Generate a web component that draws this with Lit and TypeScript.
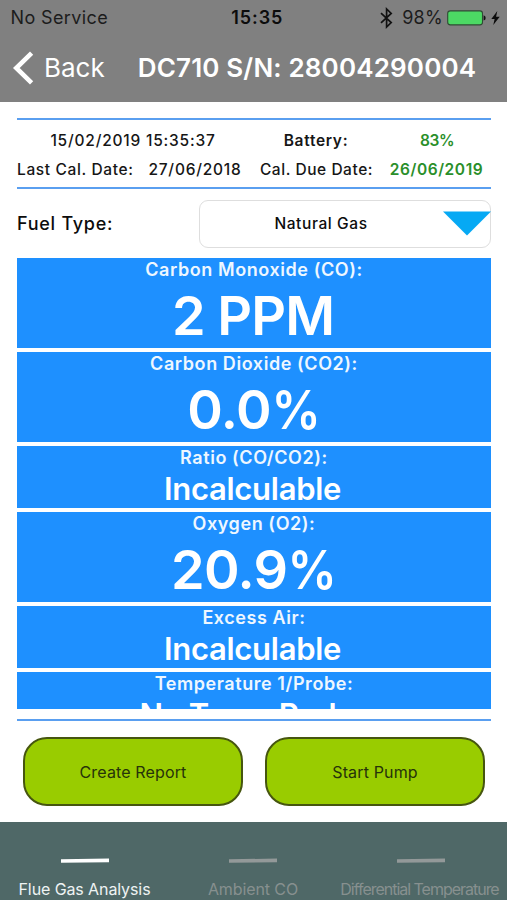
import { LitElement, html, css, svg } from "lit";
import { customElement, property } from "lit/decorators.js";
import { classMap } from "lit/directives/class-map.js";

interface Reading {
  label: string;
  value: string;
  unit?: string;
  kind: string;
}

const READINGS: Reading[] = [
  { label: "Carbon Monoxide (CO):", value: "2 PPM", kind: "ppm" },
  { label: "Carbon Dioxide (CO2):", value: "0.0", unit: "%", kind: "percent" },
  { label: "Ratio (CO/CO2):", value: "Incalculable", kind: "small" },
  { label: "Oxygen (O2):", value: "20.9", unit: "%", kind: "percent" },
  { label: "Excess Air:", value: "Incalculable", kind: "small" },
  { label: "Temperature 1/Probe:", value: "No Temp Probe", kind: "small" },
];

@customElement("status-bar")
class StatusBar extends LitElement {
  static styles = css`
    :host {
      display: grid;
      grid-template-columns: 1fr auto 1fr;
      align-items: center;
      height: 35px;
      padding: 0 7px 0 10.5px;
      font-size: 18px;
      line-height: 35px;
      color: #1c1c1c;
    }
    .carrier { letter-spacing: 0.38px; }
    .time { font-weight: 600; letter-spacing: 0.9px; color: #0c0c0c; margin-left: 4px; }
    .right { display: flex; justify-content: flex-end; align-items: center; }
    .percent { letter-spacing: 0.3px; margin: 0 4px 0 9px; }
    .bluetooth, .battery, .bolt { display: block; }
    .bolt { margin-left: 5px; }
  `;
  render() {
    return html`
      <span class="carrier">No Service</span>
      <span class="time">15:35</span>
      <div class="right">
        <svg class="bluetooth" width="13" height="22" viewBox="0 0 13 22">
          <path d="M1 6.2 L11.2 15.6 L6.6 20 V2 L11.2 6.4 L1 15.8" fill="none" stroke="#111" stroke-width="1.7" />
        </svg>
        <span class="percent">98%</span>
        <svg class="battery" width="39" height="16" viewBox="0 0 39 16">
          <rect x="0.7" y="0.9" width="34.8" height="14" rx="2.6" fill="#4cd964" stroke="#2f4a34" stroke-width="1.1" />
          <path d="M36.6 5.3 Q38.7 5.8 38.7 8 T36.6 10.6Z" fill="#111" />
        </svg>
        <svg class="bolt" width="9" height="14" viewBox="0 0 9 14">
          <path d="M6.3 0 L0.3 7.9 H3.6 L2.3 14 L8.7 5.7 H5.1Z" fill="#0c0c0c" />
        </svg>
      </div>
    `;
  }
}

@customElement("nav-header")
class NavHeader extends LitElement {
  static styles = css`
    :host {
      display: flex;
      align-items: center;
      height: 65px;
      padding: 0 0 2px 12px;
      font-size: 26px;
      color: #fff;
    }
    .chevron { display: block; margin-right: 10px; }
    .back { letter-spacing: 0; }
    .title { margin-left: 33px; font-weight: 600; letter-spacing: 0.16px; white-space: nowrap; }
  `;
  render() {
    return html`
      <svg class="chevron" width="22" height="34" viewBox="0 0 22 34">
        <path d="M19.6 2.2 L4.3 17 L19.6 31.8" fill="none" stroke="#fff" stroke-width="4.6" />
      </svg>
      <span class="back">Back</span>
      <span class="title">DC710 S/N: 28004290004</span>
    `;
  }
}

@customElement("device-info")
class DeviceInfo extends LitElement {
  static styles = css`
    :host {
      display: grid;
      grid-template-columns: 115px 125px 118px 116px;
      grid-template-rows: 29px 28px;
      height: 71px;
      padding-top: 6px;
      box-sizing: border-box;
      border-top: 2px solid #5a9ff0;
      border-bottom: 2px solid #5a9ff0;
      align-items: center;
      text-align: center;
      white-space: nowrap;
      font-size: 15.5px;
      font-weight: 500;
      color: #161616;
    }
    .stamp { grid-column: span 2; padding-right: 8px; letter-spacing: 0.79px; }
    .battery { font-weight: 600; letter-spacing: 0.7px; }
    .good { font-weight: 600; color: #2a8f2a; letter-spacing: 0.57px; padding-left: 7px; }
    .level { letter-spacing: -0.4px; padding-left: 8px; }
    .last { letter-spacing: 0.64px; text-align: left; }
    .date { letter-spacing: 0.78px; padding-left: 1px; }
    .due { letter-spacing: 0.55px; padding-left: 1px; }
  `;
  render() {
    return html`
      <span class="stamp">15/02/2019 15:35:37</span>
      <span class="battery">Battery:</span>
      <span class="good level">83%</span>
      <span class="last">Last Cal. Date:</span>
      <span class="date">27/06/2018</span>
      <span class="due">Cal. Due Date:</span>
      <span class="good">26/06/2019</span>
    `;
  }
}

@customElement("fuel-select")
class FuelSelect extends LitElement {
  static styles = css`
    :host { display: flex; align-items: center; height: 47px; padding-top: 11px; color: #0c0c0c; }
    .label { flex: 1; font-size: 18px; font-weight: 500; letter-spacing: 0.73px; }
    .box {
      display: grid;
      grid-template-columns: 242px 48px;
      align-items: center;
      box-sizing: border-box;
      width: 292px;
      height: 48px;
      border: 1px solid #dedede;
      border-radius: 9px;
    }
    .value { font-size: 15.5px; font-weight: 500; letter-spacing: 0.6px; text-align: center; }
    .arrow { display: block; margin-left: 1px; }
  `;
  render() {
    return html`
      <span class="label">Fuel Type:</span>
      <div class="box">
        <span class="value">Natural Gas</span>
        <svg class="arrow" width="48" height="25" viewBox="0 0 48 25"><path d="M0 0.5 H48 L24 24.5Z" fill="#06a9f4" /></svg>
      </div>
    `;
  }
}

@customElement("reading-card")
class ReadingCard extends LitElement {
  @property() label = "";
  @property() value = "";
  @property() unit = "";
  @property() kind = "";

  static styles = css`
    :host { display: block; flex: none; color: #fff; font-weight: 600; text-align: center; background: #1e90ff; }
    .card { height: 90.7px; overflow: hidden; }
    .card.small { height: 62.3px; }
    .label { font-size: 18px; line-height: 23px; letter-spacing: 0.57px; color: #eef7ff; }
    .value { font-size: 54px; line-height: 70px; letter-spacing: -0.9px; padding-right: 2px; }
    .percent .value { letter-spacing: -0.6px; padding-right: 0; }
    .unit { display: inline-block; transform: scaleX(0.91); margin: 0 -2px; }
    .small .value { font-size: 31px; line-height: 40px; letter-spacing: -0.28px; padding-right: 3px; }
  `;
  render() {
    return html`
      <div class=${classMap({ card: true, [this.kind]: true })}>
        <div class="label">${this.label}</div>
        <div class="value">${this.value}${this.unit ? html`<span class="unit">${this.unit}</span>` : ""}</div>
      </div>
    `;
  }
}

@customElement("tab-bar")
class TabBar extends LitElement {
  static styles = css`
    :host {
      display: grid;
      grid-template-columns: 169px 168px 168px;
      height: 78px;
      background: #4f6867;
      font-size: 16px;
      color: #87908f;
    }
    .tab { display: flex; flex-direction: column; align-items: center; padding-top: 36px; white-space: nowrap; }
    .mark { display: block; }
    .text { line-height: 20px; margin-top: 16px; letter-spacing: -0.1px; }
    .active { color: #eef3f3; }
    .long .text { letter-spacing: -1.02px; margin-left: -3px; }
  `;
  private tab(text: string, cls: string, fill: string) {
    return html`
      <div class="tab ${cls}">
        <svg class="mark" width="48" height="5" viewBox="0 0 48 5">${svg`<path d="M0 1.2 L48 0.6 V4.2 L0 4.8Z" fill=${fill} />`}</svg>
        <span class="text">${text}</span>
      </div>
    `;
  }
  render() {
    return html`
      ${this.tab("Flue Gas Analysis", "active", "#fff")}
      ${this.tab("Ambient CO", "", "#939999")}
      ${this.tab("Differential Temperature", "long", "#939999")}
    `;
  }
}

@customElement("app-root")
class AppRoot extends LitElement {
  static styles = css`
    :host {
      display: flex;
      flex-direction: column;
      height: 900px;
      overflow: hidden;
      background: #fff;
      font-family: Inter, "Liberation Sans", sans-serif;
    }
    .header { flex: none; height: 102px; background: #808080; }
    .content { flex: 1; padding: 16px 16px 0 17px; min-height: 0; }
    .readings {
      display: flex;
      flex-direction: column;
      gap: 3.5px;
      height: 451px;
      margin-top: 10.5px;
      overflow: hidden;
    }
    .rule { height: 2px; margin-top: 10.5px; background: #5a9ff0; }
    .actions { display: flex; gap: 22px; padding: 16px 6px 0; }
    .action {
      flex: 1;
      height: 69px;
      padding: 0;
      border: 2px solid #46560f;
      border-radius: 24px;
      background: #99cc00;
      color: #26330a;
      font: 400 16px Inter, sans-serif;
      letter-spacing: 0.14px;
    }
  `;
  render() {
    return html`
      <div class="header">
        <status-bar></status-bar>
        <nav-header></nav-header>
      </div>
      <div class="content">
        <device-info></device-info>
        <fuel-select></fuel-select>
        <div class="readings">
          ${READINGS.map(
            (r) => html`<reading-card .label=${r.label} .value=${r.value} .unit=${r.unit ?? ""} .kind=${r.kind}></reading-card>`,
          )}
        </div>
        <div class="rule"></div>
        <div class="actions">
          <button class="action">Create Report</button>
          <button class="action">Start Pump</button>
        </div>
      </div>
      <tab-bar></tab-bar>
    `;
  }
}
